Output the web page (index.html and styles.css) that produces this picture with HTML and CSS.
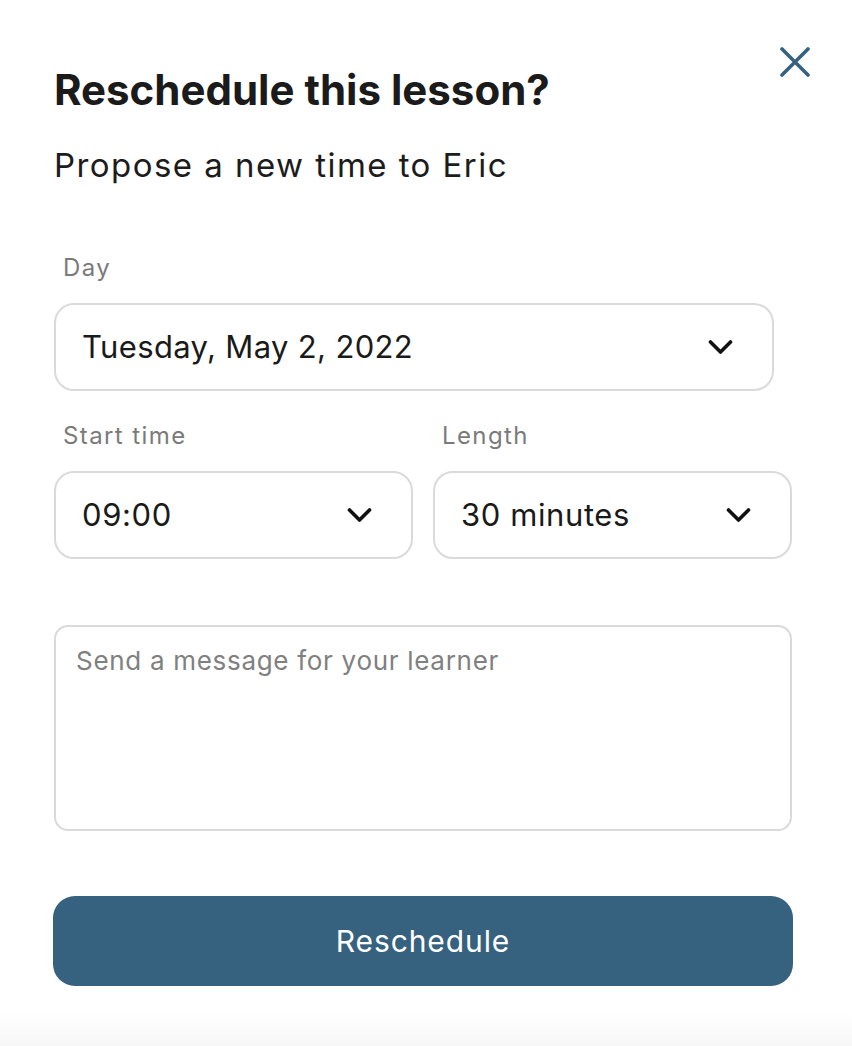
FILE: index.html
```html
<!DOCTYPE html>
<html lang="en">
<head>
<meta charset="utf-8">
<title>Reschedule this lesson?</title>
<link rel="stylesheet" href="styles.css">
</head>
<body>
<div class="dialog">
  <header class="header">
    <h1 class="title">Reschedule this lesson?</h1>
    <button class="close" aria-label="Close">
      <svg width="30" height="30" viewBox="0 0 30 30"><path d="M2 2 L28 28 M28 2 L2 28" fill="none" stroke="#36627f" stroke-width="3.6" stroke-linecap="round"/></svg>
    </button>
  </header>
  <p class="subtitle">Propose a new time to Eric</p>

  <div class="field day">
    <label class="label">Day</label>
    <div class="select select-day">
      <span class="value">Tuesday, May 2, 2022</span>
      <svg class="chev" width="25" height="16" viewBox="0 0 25 16"><polyline points="2.5,3 12.5,13 22.5,3" fill="none" stroke="#111" stroke-width="3.6" stroke-linecap="round" stroke-linejoin="round"/></svg>
    </div>
  </div>

  <div class="row">
    <div class="field">
      <label class="label">Start time</label>
      <div class="select">
        <span class="value">09:00</span>
        <svg class="chev" width="25" height="16" viewBox="0 0 25 16"><polyline points="2.5,3 12.5,13 22.5,3" fill="none" stroke="#111" stroke-width="3.6" stroke-linecap="round" stroke-linejoin="round"/></svg>
      </div>
    </div>
    <div class="field">
      <label class="label">Length</label>
      <div class="select">
        <span class="value">30 minutes</span>
        <svg class="chev" width="25" height="16" viewBox="0 0 25 16"><polyline points="2.5,3 12.5,13 22.5,3" fill="none" stroke="#111" stroke-width="3.6" stroke-linecap="round" stroke-linejoin="round"/></svg>
      </div>
    </div>
  </div>

  <div class="message">Send a message for your learner</div>

  <button class="submit">Reschedule</button>
</div>
</body>
</html>
```

FILE: styles.css
```css
* { box-sizing: border-box; }
html, body { margin: 0; padding: 0; }
body {
  width: 852px;
  height: 1046px;
  overflow: hidden;
  font-family: Inter, "Noto Sans", "Liberation Sans", sans-serif;
  color: #1c1c1c;
  background: linear-gradient(to bottom, #ffffff 0, #ffffff 1012px, #f7f7f7 1046px);
}
.dialog {
  padding-left: 54px;
  width: 852px;
}
.header {
  display: flex;
  justify-content: space-between;
  align-items: flex-start;
  width: 756px;
}
.title {
  margin: 66px 0 0;
  font-size: 42px;
  line-height: 48px;
  font-weight: 700;
  letter-spacing: 0;
  color: #1b1b1b;
}
.close {
  margin-top: 47px;
  padding: 0;
  border: 0;
  background: none;
  width: 30px;
  height: 30px;
  display: block;
}
.close svg { display: block; }
.subtitle {
  margin: 31px 0 0;
  font-size: 33px;
  line-height: 40px;
  font-weight: 400;
  letter-spacing: 1.45px;
  color: #1c1c1c;
}
.field { display: flex; flex-direction: column; }
.day { margin-top: 69px; }
.label {
  font-size: 24px;
  line-height: 28px;
  letter-spacing: 1.4px;
  color: #7a7a7a;
  padding-left: 9px;
  margin-bottom: 21px;
}
.select {
  height: 88px;
  border: 2px solid #dadada;
  border-radius: 20px;
  display: flex;
  align-items: center;
  justify-content: space-between;
  padding: 0 39px 0 26px;
  background: #fff;
}
.select-day { width: 720px; }
.value {
  font-size: 31px;
  line-height: 36px;
  color: #1a1a1a;
  letter-spacing: 0.6px;
}
.select-day .value { letter-spacing: 0.35px; }
.chev { display: block; }
.row {
  display: grid;
  grid-template-columns: 359px 359px;
  column-gap: 20px;
  margin-top: 31px;
}
.message {
  margin-top: 66px;
  width: 738px;
  height: 206px;
  border: 2px solid #dadada;
  border-radius: 14px;
  padding: 18px 20px;
  font-size: 26px;
  line-height: 32px;
  letter-spacing: 0.7px;
  color: #808080;
}
.submit {
  display: block;
  margin: 65px 0 0 -1px;
  width: 740px;
  height: 90px;
  border: 0;
  border-radius: 22px;
  background: #36627f;
  color: #fff;
  font-family: Inter, "Noto Sans", "Liberation Sans", sans-serif;
  font-size: 30px;
  font-weight: 400;
  letter-spacing: 0.9px;
}
```
